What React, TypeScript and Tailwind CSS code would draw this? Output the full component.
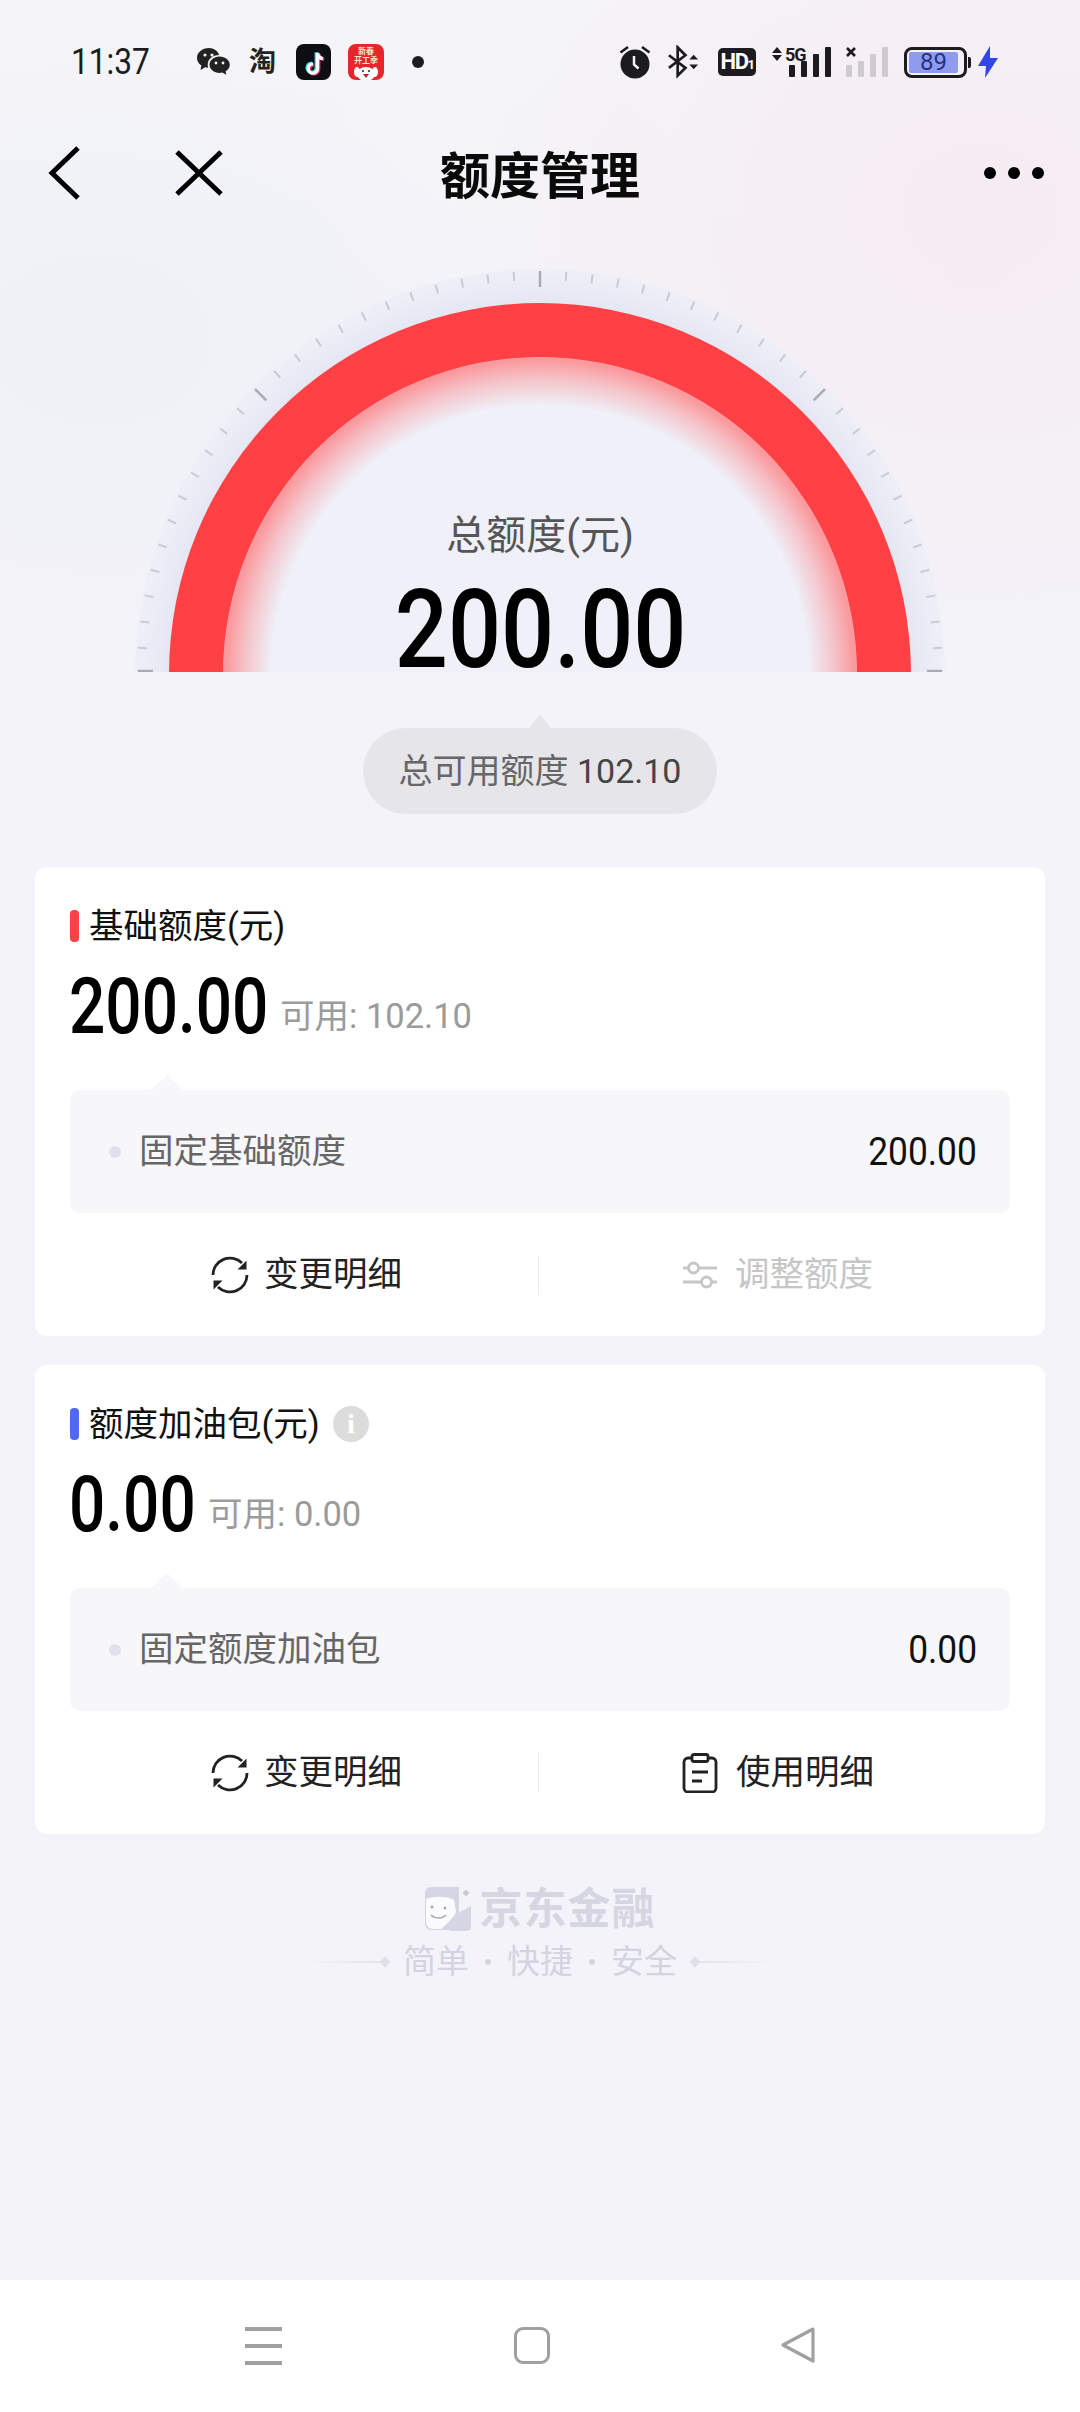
import React from 'react'

const sans = "font-['Roboto','Noto_Sans_CJK_SC',sans-serif]"

// Speedometer-like gauge, in page coordinates (centre 540,674)
function Gauge() {
  const cx = 540
  const cy = 674
  const ticks = Array.from({ length: 49 }, (_, i) => {
    const a = (Math.PI * i) / 48
    const major = i % 12 === 0
    const r1 = major ? 387 : 394
    const r2 = 403
    return {
      x1: cx - Math.cos(a) * r1,
      y1: cy - Math.sin(a) * r1,
      x2: cx - Math.cos(a) * r2,
      y2: cy - Math.sin(a) * r2,
      major,
    }
  })
  return (
    <svg width="1080" height="442" viewBox="0 230 1080 442" className="block">
      <defs>
        <radialGradient id="band" gradientUnits="userSpaceOnUse" cx={cx} cy={cy} r="408">
          <stop offset="0.9" stopColor="#e3e6f2" />
          <stop offset="0.95" stopColor="#eaebf5" />
          <stop offset="1" stopColor="#eff0f7" />
        </radialGradient>
        <radialGradient id="glow" gradientUnits="userSpaceOnUse" cx={cx} cy={cy} r="320">
          <stop offset="0.84" stopColor="#f9a0a4" stopOpacity="0" />
          <stop offset="0.92" stopColor="#f9a0a4" stopOpacity="0.55" />
          <stop offset="0.98" stopColor="#fa9a9e" />
          <stop offset="1" stopColor="#fa9a9e" />
        </radialGradient>
      </defs>
      <circle cx={cx} cy={cy} r="405" fill="url(#band)" />
      <circle cx={cx} cy={cy} r="371" fill="#ff4145" />
      <circle cx={cx} cy={cy} r="316.500" fill="#eff0f8" />
      <circle cx={cx} cy={cy} r="317" fill="url(#glow)" />
      {ticks.map((t, i) => (
        <line
          key={i}
          x1={t.x1}
          y1={t.y1}
          x2={t.x2}
          y2={t.y2}
          stroke={t.major ? '#a9abb3' : '#c9cad3'}
          strokeWidth={t.major ? 2.5 : 2}
        />
      ))}
      <line x1="138" y1="671" x2="153" y2="671" stroke="#a9abb3" strokeWidth="2.5" />
      <line x1="927" y1="671" x2="942" y2="671" stroke="#a9abb3" strokeWidth="2.5" />
    </svg>
  )
}

function WeChatIcon() {
  return (
    <svg width="34" height="30" viewBox="0 0 34 30" className="block">
      <path d="M13 1C6 1 1 5.500 1 11c0 3.200 1.700 5.800 4.300 7.600L4.500 23l4.700-2.700c1 .3 2 .4 3.100.4-.4-1-.6-2-.6-3 0-5.500 5-9.700 11.500-9.700C21.900 3.900 17.900 1 13 1z" fill="#222" />
      <path d="M23.500 9.500c-5.500 0-10 3.700-10 8.200s4.500 8.200 10 8.200c1 0 1.900-.1 2.800-.4l4 2.300-.7-3.500c2.600-1.500 4.200-3.900 4.200-6.600 0-4.500-4.500-8.200-10.300-8.200z" fill="#222" />
      <circle cx="9" cy="8" r="1.600" fill="#f2f2f8" />
      <circle cx="16" cy="8" r="1.600" fill="#f2f2f8" />
      <circle cx="20" cy="16" r="1.400" fill="#f2f2f8" />
      <circle cx="27" cy="16" r="1.400" fill="#f2f2f8" />
    </svg>
  )
}

function TikTokIcon() {
  const note = 'M18.500 6v15.500a4.600 4.600 0 1 1-4.600-4.600 M18.500 6c.4 3.400 2.500 5.300 5.500 5.600'
  return (
    <div className="w-[35px] h-[36px] rounded-[8px] bg-[#0d0d14] flex items-center justify-center">
      <svg width="30" height="30" viewBox="0 0 30 30" fill="none" strokeWidth="3.400" className="block">
        <path d={note} stroke="#35e0e5" transform="translate(-1.200 -0.800)" />
        <path d={note} stroke="#f0285a" transform="translate(1.200 0.800)" />
        <path d={note} stroke="#fff" />
      </svg>
    </div>
  )
}

function RedAppIcon() {
  return (
    <div className="relative w-[36px] h-[36px] rounded-[8px] bg-[#e8252b] overflow-hidden flex flex-col items-center pt-[3px]">
      <span className="text-[8px] leading-[9px] font-bold text-[#ffe9c9]">新春</span>
      <span className="text-[8px] leading-[9px] font-bold text-[#ffe9c9]">开工季</span>
      <svg width="28" height="15" viewBox="0 0 28 15" className="block">
        <ellipse cx="14" cy="9" rx="9" ry="7" fill="#fff" />
        <ellipse cx="5" cy="7" rx="3" ry="5" fill="#fff" />
        <ellipse cx="23" cy="7" rx="3" ry="5" fill="#fff" />
        <circle cx="11" cy="6" r="1" fill="#222" />
        <circle cx="17" cy="6" r="1" fill="#222" />
        <path d="M11 9h6l-3 4z" fill="#c81e24" />
      </svg>
    </div>
  )
}

function AlarmIcon() {
  return (
    <svg width="32" height="34" viewBox="0 0 32 34" className="block">
      <circle cx="16" cy="19" r="14.500" fill="#1c1c20" />
      <path d="M15 11v8.500l4.500 4" stroke="#f2f2f8" strokeWidth="2.500" fill="none" />
      <path d="M1.500 7.500 9 2M30.500 7.500 23 2" stroke="#1c1c20" strokeWidth="2.600" />
    </svg>
  )
}

function BluetoothIcon() {
  return (
    <svg width="33" height="34" viewBox="0 0 34 34" fill="none" className="block">
      <path d="M2 10l17 13-8 8V2l8 8L2 23" stroke="#1c1c20" strokeWidth="2.800" />
      <path d="M23 14.500l4.500-5 4.500 5zM23 19.500l4.500 5 4.500-5z" fill="#1c1c20" />
    </svg>
  )
}

function SignalBars({ color, withX }: { color: string; withX?: boolean }) {
  const bars = [
    { x: 0, h: 12 },
    { x: 12, h: 16 },
    { x: 24, h: 23 },
    { x: 36, h: 30 },
  ]
  return (
    <svg width="43" height="32" viewBox="0 0 43 32" className="block">
      {bars.map((b) => (
        <rect key={b.x} x={b.x} y={31 - b.h} width="6" height={b.h} rx="1" fill={color} />
      ))}
      {withX && <path d="M1 2l8 8M9 2l-8 8" stroke="#1c1c20" strokeWidth="2.600" />}
    </svg>
  )
}

function StatusBar() {
  return (
    <div className={`${sans} h-[124px] flex items-center pl-[71px] pr-[82px] text-[#1c1c20]`}>
      <span className="w-[78px] whitespace-nowrap origin-left scale-x-[0.88] text-[36px] leading-none">11:37</span>
      <div className="ml-[47px]"><WeChatIcon /></div>
      <span className="ml-[19px] w-[28px] text-[27px] leading-none font-bold text-[#222]">淘</span>
      <div className="ml-[19px]"><TikTokIcon /></div>
      <div className="ml-[17px]"><RedAppIcon /></div>
      <span className="ml-[28px] w-[12px] h-[12px] rounded-full bg-[#1c1c20]" />

      <div className="ml-auto flex items-center">
        <AlarmIcon />
        <div className="ml-[16px]"><BluetoothIcon /></div>
        <div className="ml-[18px] w-[38px] h-[28px] rounded-[5px] bg-[#1c1c20] text-white flex items-baseline justify-center font-bold text-[22px] leading-[28px] tracking-[-1.500px]">
          HD<span className="text-[13px]">1</span>
        </div>
        <div className="relative ml-[15px] w-[60px] h-[32px]">
          <svg width="12" height="16" viewBox="0 0 12 16" className="absolute left-0 top-0">
            <path d="M1 7l5-6 5 6zM1 9l5 6 5-6z" fill="#1c1c20" />
          </svg>
          <span className="absolute left-[14px] top-[-1px] text-[18px] leading-[20px] font-bold tracking-[-1px]">5G</span>
          <div className="absolute left-[18px] top-0"><SignalBars color="#1c1c20" /></div>
        </div>
        <div className="ml-[15px]"><SignalBars color="#cdcad0" withX /></div>
        <div className="relative ml-[15px] w-[63px] h-[31px] rounded-[8px] border-[3px] border-[#1c1c20] p-[2px]">
          <div className="h-full w-[49px] rounded-[2px] bg-[#8f9bee] flex items-center justify-center text-[24px] leading-none text-[#27337f]">
            89
          </div>
        </div>
        <div className="ml-[1px] w-[3px] h-[11px] rounded-r-[2px] bg-[#1c1c20]" />
        <svg width="20" height="32" viewBox="0 0 20 32" className="block ml-[7px]">
          <path d="M12 0 0 20h8l-1 12L20 12h-8z" fill="#3344e8" />
        </svg>
      </div>
    </div>
  )
}

function NavBar() {
  return (
    <div className="h-[106px] relative flex items-center justify-center">
      <svg width="32" height="54" viewBox="0 0 32 54" fill="none" className="absolute left-[48px] top-[22px]">
        <path d="M30 2 4 27l26 25" stroke="#000" strokeWidth="5" />
      </svg>
      <svg width="48" height="46" viewBox="0 0 48 46" fill="none" className="absolute left-[175px] top-[26px]">
        <path d="M2 2l44 42M46 2 2 44" stroke="#000" strokeWidth="5" />
      </svg>
      <h1 className={`${sans} text-[50px] leading-none font-bold text-[#0a0a0a]`}>额度管理</h1>
      <div className="absolute right-[36px] top-[43px] flex gap-[12px]">
        <span className="w-[12px] h-[12px] rounded-full bg-black" />
        <span className="w-[12px] h-[12px] rounded-full bg-black" />
        <span className="w-[12px] h-[12px] rounded-full bg-black" />
      </div>
    </div>
  )
}

function RefreshIcon() {
  return (
    <svg width="38" height="38" viewBox="0 0 38 38" fill="none" className="block">
      <path d="M2 19A17 17 0 0 1 31 7" stroke="#222" strokeWidth="2.800" />
      <path d="M36 19A17 17 0 0 1 7 31" stroke="#222" strokeWidth="2.800" />
      <path d="M35.500 4.500v9h-9zM2.500 33.500v-9h9z" fill="#222" />
    </svg>
  )
}

function SlidersIcon() {
  return (
    <svg width="36" height="28" viewBox="0 0 36 28" fill="none" stroke="#c6c6c6" strokeWidth="2.800" className="block">
      <path d="M1 7h5M17 7h18M1 21h18M30 21h5" />
      <circle cx="11.500" cy="7" r="5" />
      <circle cx="24.500" cy="21" r="5" />
    </svg>
  )
}

function ClipboardIcon() {
  return (
    <svg width="38" height="40" viewBox="0 0 38 40" fill="none" stroke="#222" strokeWidth="2.800" className="block">
      <path d="M11 5H7a4 4 0 0 0-4 4v26a4 4 0 0 0 4 4h24a4 4 0 0 0 4-4V9a4 4 0 0 0-4-4h-4" />
      <rect x="11" y="1.500" width="16" height="7" rx="2" />
      <path d="M11 19h16M11 28h10" />
    </svg>
  )
}

type CardProps = {
  title: string
  barColor: string
  amount: string
  amountWidth: string
  available: string
  rowLabel: string
  rowValue: string
  hasInfo?: boolean
  rightIcon: React.ReactNode
  rightLabel: string
  rightLabelColor: string
}

function Card(props: CardProps) {
  return (
    <section className="mx-[35px] h-[469px] rounded-[12px] bg-white pt-[39px] px-[35px]">
      {/* Title */}
      <div className="h-[40px] flex items-center">
        <span className={`w-[9px] h-[32px] rounded-[4px] ${props.barColor}`} />
        <span className="ml-[10px] text-[34.500px] leading-none text-[#111]">{props.title}</span>
        {props.hasInfo && (
          <span className="ml-[13px] w-[36px] h-[36px] rounded-full bg-[#dcdcdc] flex items-center justify-center font-['Liberation_Serif',serif] font-bold text-[28px] leading-none text-white">
            i
          </span>
        )}
      </div>

      {/* Amount */}
      <div className="mt-[23px] h-[76px] flex items-baseline -ml-[1px]">
        <span className={`${props.amountWidth} inline-block whitespace-nowrap`}>
          <span className="inline-block origin-left scale-x-[0.83] text-[77px] leading-[76px] font-medium text-black">
            {props.amount}
          </span>
        </span>
        <span className="ml-[14px] -translate-y-[5px] text-[34.500px] leading-none text-[#9b9b9b]">可用: {props.available}</span>
      </div>

      {/* Detail panel with a small notch */}
      <div className="relative mt-[45px] h-[123px] rounded-[10px] bg-[#f7f7fa] flex items-center pl-[39px] pr-[33px]">
        <span className="absolute left-[81px] top-[-15px] w-[32px] h-[15px] bg-[#f7f7fa] [clip-path:polygon(50%_0,100%_100%,0_100%)]" />
        <span className="w-[12px] h-[12px] rounded-full bg-[#e1e1ee]" />
        <span className="ml-[18px] text-[34.500px] leading-none text-[#666]">{props.rowLabel}</span>
        <span className="ml-auto origin-right scale-x-[0.93] text-[38px] leading-none text-[#111]">{props.rowValue}</span>
      </div>

      {/* Actions */}
      <div className="h-[123px] flex items-center">
        <div className="flex-1 flex items-center justify-center gap-[15px] pl-[4px]">
          <RefreshIcon />
          <span className="text-[34.500px] leading-none text-[#222]">变更明细</span>
        </div>
        <span className="w-px h-[40px] bg-[#ececec] -translate-x-[1px]" />
        <div className="flex-1 flex items-center justify-center gap-[17px] pl-[5px]">
          {props.rightIcon}
          <span className={`text-[34.500px] leading-none ${props.rightLabelColor}`}>{props.rightLabel}</span>
        </div>
      </div>
    </section>
  )
}

function JdLogo() {
  return (
    <svg width="48" height="46" viewBox="0 0 48 46" className="block">
      <path d="M6 1h28v10H0V7a6 6 0 0 1 6-6z" fill="#d5d6e3" />
      <path d="M30 4h4v30l12 10H6a6 6 0 0 1-6-6V11h30z" fill="#d5d6e3" />
      <path d="M1 13c8-3 22-3 28 1l2 12c-2 5-8 11-15 17H8a7 7 0 0 1-7-7z" fill="#fbfbfd" />
      <path d="M35 26l11-6v20a5 5 0 0 1-5 5H25z" fill="#d5d6e3" />
      <circle cx="41" cy="7" r="7" fill="#f3f3f9" />
      <rect x="38.500" y="4.500" width="5" height="5" transform="rotate(45 41 7)" fill="#c8c9d8" />
      <circle cx="7" cy="21" r="1.500" fill="#a9aab8" />
      <circle cx="20" cy="22" r="1.500" fill="#a9aab8" />
      <path d="M6 29c4 4 11 4 15 0" stroke="#a9aab8" strokeWidth="1.600" fill="none" />
    </svg>
  )
}

function Footer() {
  return (
    <div className={`${sans} mt-[52px] flex flex-col items-center`}>
      <div className="h-[46px] flex items-center gap-[7px]">
        <JdLogo />
        <span className="text-[43px] leading-none font-bold tracking-[1px] text-[#d6d6e3]">京东金融</span>
      </div>
      <div className="mt-[8px] flex items-center">
        <span className="w-[76px] h-[2px] bg-gradient-to-r from-transparent to-[#e3e3ec]" />
        <span className="w-[8px] h-[8px] rotate-45 bg-[#dfdfe9]" />
        <div className="mx-[14px] flex items-center gap-[16px] text-[33px] leading-[44px] text-[#d3d3e1] whitespace-nowrap">
          <span>简单</span>
          <span className="w-[6px] h-[6px] rounded-full bg-[#d3d3e1]" />
          <span>快捷</span>
          <span className="w-[6px] h-[6px] rounded-full bg-[#d3d3e1]" />
          <span>安全</span>
        </div>
        <span className="w-[8px] h-[8px] rotate-45 bg-[#dfdfe9]" />
        <span className="w-[76px] h-[2px] bg-gradient-to-l from-transparent to-[#e3e3ec]" />
      </div>
    </div>
  )
}

function BottomBar() {
  return (
    <div className="mt-auto h-[132px] bg-white relative">
      <div className="absolute left-[245px] top-[47px] w-[37px] flex flex-col gap-[13px]">
        <span className="h-[4px] bg-[#a0a0a0]" />
        <span className="h-[4px] bg-[#a0a0a0]" />
        <span className="h-[4px] bg-[#a0a0a0]" />
      </div>
      <span className="absolute left-[514px] top-[47px] w-[36px] h-[37px] rounded-[9px] border-[3.500px] border-[#a0a0a0]" />
      <svg width="36" height="38" viewBox="0 0 36 38" fill="none" className="absolute left-[780px] top-[46px]">
        <path d="M33 3 3 19l30 16z" stroke="#a0a0a0" strokeWidth="3.200" strokeLinejoin="round" />
      </svg>
    </div>
  )
}

export default function App() {
  return (
    <div
      className={`${sans} w-[1080px] h-[2412px] flex flex-col overflow-hidden bg-[#f3f3f9] bg-[radial-gradient(ellipse_540px_460px_at_980px_210px,#f6ecf1_0%,#f6ecf100_100%),radial-gradient(ellipse_420px_320px_at_100px_340px,#eff1f7_0%,#eff1f700_100%),linear-gradient(180deg,#f5f5f8_0%,#f3f3f9_300px)]`}
    >
      <StatusBar />
      <NavBar />

      {/* Total quota gauge */}
      <div className="relative h-[442px]">
        <Gauge />
        <div className="absolute inset-x-0 top-[282px] flex flex-col items-center">
          <span className="text-[40px] leading-[48px] text-[#555]">总额度(元)</span>
          <span className="mt-[21px] ml-[2px] origin-center scale-x-[0.85] text-[110px] leading-[98px] font-medium text-black">
            200.00
          </span>
        </div>
      </div>

      {/* Available pill */}
      <div className="relative mt-[56px] mx-auto w-[354px] h-[86px] rounded-full bg-[#e6e6ea] flex items-center justify-center text-[34px] leading-none text-[#666] whitespace-pre">
        <span className="absolute left-[166px] top-[-13px] w-[22px] h-[13px] bg-[#e6e6ea] [clip-path:polygon(50%_0,100%_100%,0_100%)]" />
        总可用额度 <span className="text-[#444]">102.10</span>
      </div>

      <div className="mt-[53px] flex flex-col gap-[29px]">
        <Card
          title="基础额度(元)"
          barColor="bg-[#ff4145]"
          amount="200.00"
          amountWidth="w-[197px]"
          available="102.10"
          rowLabel="固定基础额度"
          rowValue="200.00"
          rightIcon={<SlidersIcon />}
          rightLabel="调整额度"
          rightLabelColor="text-[#c6c6c6]"
        />
        <Card
          title="额度加油包(元)"
          barColor="bg-[#5069f2]"
          amount="0.00"
          amountWidth="w-[125px]"
          available="0.00"
          rowLabel="固定额度加油包"
          rowValue="0.00"
          hasInfo
          rightIcon={<ClipboardIcon />}
          rightLabel="使用明细"
          rightLabelColor="text-[#222]"
        />
      </div>

      <Footer />
      <BottomBar />
    </div>
  )
}
